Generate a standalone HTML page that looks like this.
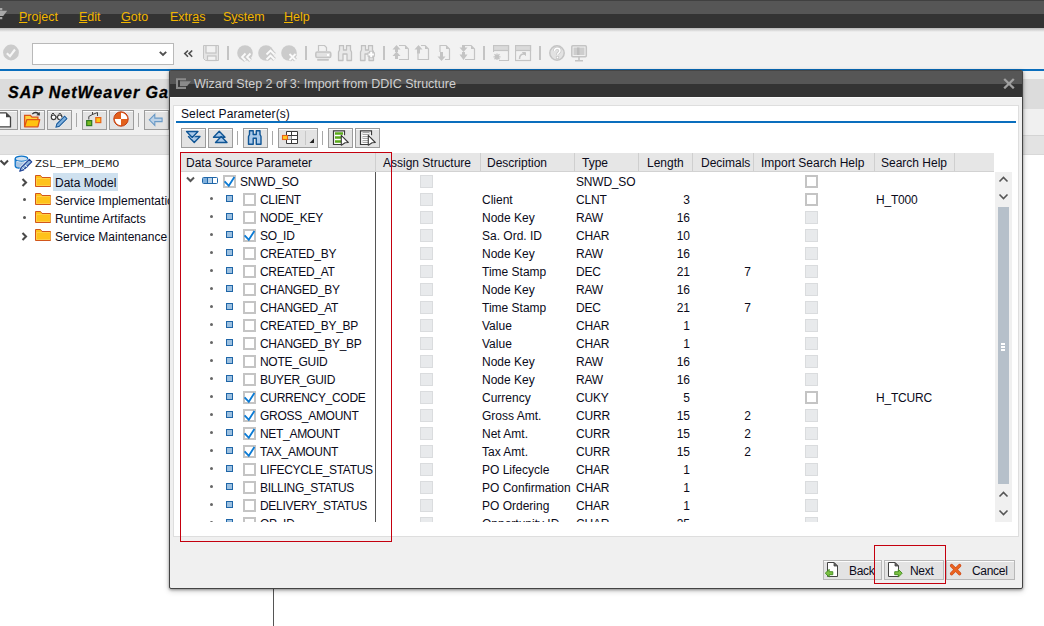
<!DOCTYPE html>
<html><head><meta charset="utf-8"><style>
*{margin:0;padding:0;box-sizing:border-box}
html,body{width:1044px;height:626px;overflow:hidden;background:#fff;font-family:"Liberation Sans",sans-serif;font-size:12px;color:#000}
.a{position:absolute}
#menubar{left:0;top:0;width:1044px;height:28px;background:linear-gradient(#404040 0,#404040 1px,#565656 1px,#565656 14px,#333 14px,#333 28px)}
.m{position:absolute;top:9px;color:#f2b600;font-size:12.5px;line-height:16px;white-space:nowrap}
.m u{text-decoration:underline;text-underline-offset:1px;text-decoration-thickness:1px}
#tbbg{left:0;top:28px;width:1044px;height:127px;background:#f2f2f2}
#shadow1{left:0;top:28px;width:1044px;height:4px;background:linear-gradient(#b8b8b8,#f2f2f2)}
#blue{left:0;top:69px;width:1044px;height:2px;background:#0a6ebd}
#titleband{left:0;top:79px;width:1044px;height:30px;background:#dcdcdc}
#apptb{left:0;top:109px;width:1044px;height:26px;background:#f0f0f0}
#grayband{left:0;top:135px;width:1044px;height:20px;background:#e3e3e3;border-top:1px solid #d4d4d4;border-bottom:1px solid #d8d8d8}
.sep{position:absolute;width:2px;background:#c4c4c4}
.btn{position:absolute;height:20px;border:1px solid #9c9c9c;background:#e3e3e3;box-shadow:inset 0 1px 0 #fcfcfc}
.tr{position:absolute;left:0;height:18px;line-height:18px;white-space:nowrap}
</style></head><body>
<div id="menubar" class="a">
<svg class="a" style="left:0;top:7px" width="8" height="14"><path d="M0 1h2.3v2.2H0zM0 3.8h7.2L3.2 9H0zM0 10h2.3v2.2H0z" fill="#a8a8a8"/></svg>
<div class="m" style="left:19px"><u>P</u>roject</div>
<div class="m" style="left:79px"><u>E</u>dit</div>
<div class="m" style="left:121px"><u>G</u>oto</div>
<div class="m" style="left:170px">Extr<u>a</u>s</div>
<div class="m" style="left:223px">S<u>y</u>stem</div>
<div class="m" style="left:284px"><u>H</u>elp</div>
</div>
<div id="tbbg" class="a"></div><div id="shadow1" class="a"></div>
<div id="blue" class="a"></div><div id="titleband" class="a"></div><div id="apptb" class="a"></div><div id="grayband" class="a"></div>
<svg class="a" style="left:3px;top:44px" width="17" height="17"><circle cx="8" cy="8.5" r="7.9" fill="#cbcbcb"/><path d="M3.8 9.2l3.2 3 5-6.7" stroke="#f6f6f6" stroke-width="2.1" fill="none"/></svg>
<div class="a" style="left:32px;top:43px;width:142px;height:22px;background:#fff;border:1px solid #b9b9b9"></div>
<svg class="a" style="left:158px;top:50px" width="10" height="8"><path d="M1.8 1.8L5 5l3.2-3.2" stroke="#505050" stroke-width="1.9" fill="none"/></svg>
<svg class="a" style="left:183px;top:49px" width="11" height="10"><path d="M5 1.5L1.8 4.6 5 7.7M9.2 1.5L6 4.6l3.2 3.1" stroke="#505050" stroke-width="1.6" fill="none"/></svg>
<svg class="a" style="left:203px;top:45px" width="17" height="17"><path d="M.5 .5h15v15H2.5L.5 13.5z" fill="#e4e4e4" stroke="#c4c4c4" stroke-width="1"/><rect x="3" y=".5" width="10" height="7.5" fill="#f2f2f2" stroke="#c4c4c4" stroke-width="1.2"/><rect x="4.5" y="11" width="8.5" height="4.5" fill="#f2f2f2" stroke="#c4c4c4" stroke-width="1.2"/></svg>
<div class="sep" style="left:227px;top:46px;height:14px"></div>
<div class="sep" style="left:305px;top:46px;height:14px"></div>
<div class="sep" style="left:383px;top:46px;height:14px"></div>
<div class="sep" style="left:483px;top:46px;height:14px"></div>
<div class="sep" style="left:539px;top:46px;height:14px"></div>
<svg class="a" style="left:237px;top:45px" width="18" height="17"><circle cx="8" cy="8" r="7.8" fill="#cbcbcb"/><path d="M8.5 8.5L5 12l3.5 3.5M13.5 8.5L10 12l3.5 3.5" stroke="#cbcbcb" stroke-width="4" fill="none"/><path d="M8.5 8.5L5 12l3.5 3.5M13.5 8.5L10 12l3.5 3.5" stroke="#fafafa" stroke-width="1.8" fill="none"/></svg>
<svg class="a" style="left:258px;top:45px" width="18" height="17"><circle cx="8" cy="8" r="7.8" fill="#cbcbcb"/><path d="M8.5 9.5l4-4 4 4M8.5 14.5l4-4 4 4" stroke="#cbcbcb" stroke-width="4" fill="none"/><path d="M8.5 9.5l4-4 4 4M8.5 14.5l4-4 4 4" stroke="#fafafa" stroke-width="1.8" fill="none"/></svg>
<svg class="a" style="left:281px;top:45px" width="18" height="17"><circle cx="8" cy="8" r="7.8" fill="#cbcbcb"/><path d="M8.5 9l6 6M14.5 9l-6 6" stroke="#cbcbcb" stroke-width="4" fill="none"/><path d="M8.5 9l6 6M14.5 9l-6 6" stroke="#fafafa" stroke-width="1.8" fill="none"/></svg>
<svg class="a" style="left:315px;top:45px" width="17" height="17"><path d="M3.5 6V.5h6l2 2V6" fill="none" stroke="#c4c4c4" stroke-width="1.2"/><rect x=".8" y="7" width="15" height="5.5" rx="1.5" fill="#e2e2e2" stroke="#c4c4c4" stroke-width="1.5"/><rect x="12" y="9" width="2" height="2" fill="#fff"/><rect x="2" y="14" width="12" height="1.8" rx=".8" fill="#c4c4c4"/></svg>
<svg class="a" style="left:337px;top:45px" width="17" height="17"><path d="M1.5 15.5V7L2.5 5V.5h4V5h3V.5h4V5l1 2v8.5h-4.5V9H6v6.5z" fill="#e8e8e8" stroke="#c0c0c0" stroke-width="1.3" stroke-linejoin="round"/></svg>
<svg class="a" style="left:359px;top:45px" width="17" height="17"><path d="M1.5 15.5V7L2.5 5V.5h4V5h3V.5h4V5l1 2v8.5h-4.5V9H6v6.5z" fill="#e8e8e8" stroke="#c0c0c0" stroke-width="1.3" stroke-linejoin="round"/><path d="M12.2 5.8v7.4M8.5 9.5h7.4" stroke="#c4c4c4" stroke-width="4.4"/><path d="M12.2 6.8v5.4M9.5 9.5h5.4" stroke="#fff" stroke-width="2"/></svg>
<svg class="a" style="left:392px;top:45px" width="17" height="17"><path d="M7 .5h6l3.5 3.5v10.5H7" fill="none" stroke="#c4c4c4" stroke-width="1.2"/><path d="M13 .5l3.5 3.5h-3.5z" fill="#c4c4c4"/><path d="M4.5 0L8.5 4.5H6V7H3V4.5H.5zM4.5 6.5L8.5 11H6v3H3v-3H.5z" fill="#c4c4c4"/></svg>
<svg class="a" style="left:414px;top:45px" width="17" height="17"><path d="M7 .5h4l3.5 3.5v10.5H4V8" fill="none" stroke="#c4c4c4" stroke-width="1.2"/><path d="M11 .5l3.5 3.5H11z" fill="#c4c4c4"/><path d="M4.5 0L8.5 4.5H6V8.5H3V4.5H.5z" fill="#c4c4c4"/></svg>
<svg class="a" style="left:437px;top:45px" width="17" height="17"><path d="M3 7V.5h6l3.5 3.5v10.5H8" fill="none" stroke="#c4c4c4" stroke-width="1.2"/><path d="M9 .5l3.5 3.5H9z" fill="#c4c4c4"/><path d="M4.5 16L8.5 11.5H6V7H3v4.5H.5z" fill="#c4c4c4"/></svg>
<svg class="a" style="left:459px;top:45px" width="17" height="17"><path d="M6 .5h6l3.5 3.5v10.5H6" fill="none" stroke="#c4c4c4" stroke-width="1.2"/><path d="M12 .5l3.5 3.5h-3.5z" fill="#c4c4c4"/><path d="M3 0h3v2.5h2.5L4.5 7 .5 2.5H3zM3 7h3v2.5h2.5L4.5 15 .5 9.5H3z" fill="#c4c4c4"/></svg>
<svg class="a" style="left:493px;top:45px" width="17" height="17"><path d="M6 15.5h9.5V.5H.5V7" fill="none" stroke="#c4c4c4" stroke-width="1.2"/><rect x=".5" y=".5" width="15" height="5" fill="#dadada" stroke="#c4c4c4" stroke-width="1.2"/><path d="M4 8.5v6.5M.5 11.8h7M1.5 9.3l5 5M6.5 9.3l-5 5" stroke="#c4c4c4" stroke-width="1.3"/><circle cx="4" cy="11.8" r="2" fill="#c4c4c4"/></svg>
<svg class="a" style="left:515px;top:45px" width="17" height="17"><rect x=".5" y=".5" width="15" height="15" fill="none" stroke="#c4c4c4" stroke-width="1.2"/><rect x=".5" y=".5" width="15" height="5" fill="#dadada" stroke="#c4c4c4" stroke-width="1.2"/><path d="M4.5 14c0-3 1.5-5 4.5-5" fill="none" stroke="#c4c4c4" stroke-width="1.5"/><path d="M7.5 7.5h3v3z" fill="#c4c4c4" stroke="#c4c4c4"/></svg>
<svg class="a" style="left:549px;top:45px" width="17" height="17"><circle cx="8" cy="8" r="7.2" fill="#e2e2e2" stroke="#c4c4c4" stroke-width="1.5"/><path d="M5.5 6c0-2 1.2-2.8 2.7-2.8S11 4 11 5.8c0 1.8-2.5 2-2.5 4" fill="none" stroke="#c8c8c8" stroke-width="3"/><path d="M5.5 6c0-2 1.2-2.8 2.7-2.8S11 4 11 5.8c0 1.8-2.5 2-2.5 4" fill="none" stroke="#fff" stroke-width="1.4"/><rect x="7.3" y="11.3" width="2.4" height="2.4" fill="#fff" stroke="#c8c8c8" stroke-width=".8"/></svg>
<svg class="a" style="left:571px;top:45px" width="17" height="17"><rect x=".8" y=".8" width="14.5" height="11" rx="1" fill="#f0f0f0" stroke="#c4c4c4" stroke-width="1.5"/><rect x="2.5" y="2.5" width="11" height="7.5" fill="#cdcdcd"/><rect x="6" y="2.5" width="2.5" height="7.5" fill="#bdbdbd"/><path d="M8 12v3M4 15.8h8" stroke="#c4c4c4" stroke-width="1.6"/></svg>
<div class="a" style="left:8px;top:84px;font-size:16px;letter-spacing:1px;font-weight:bold;font-style:italic;-webkit-text-stroke:.3px #000;line-height:18px;white-space:nowrap">SAP NetWeaver Gateway Service Builder</div>
<div class="btn" style="left:-8px;top:110px;width:26px"></div>
<div class="btn" style="left:20px;top:110px;width:25px"></div>
<div class="btn" style="left:47px;top:110px;width:25px"></div>
<div class="btn" style="left:82px;top:110px;width:25px"></div>
<div class="btn" style="left:109px;top:110px;width:25px"></div>
<div class="btn" style="left:144px;top:110px;width:25px"></div>
<div class="sep" style="left:76px;top:113px;height:14px;width:1px;background:#a8a8a8"></div>
<div class="sep" style="left:138px;top:113px;height:14px;width:1px;background:#a8a8a8"></div>
<svg class="a" style="left:0;top:112px" width="16" height="16"><path d="M-2 .8h8l4.5 4.5v9.5H-2z" fill="#fff" stroke="#444" stroke-width="1.3"/><path d="M6 .8l4.5 4.5H6z" fill="#444"/></svg>
<svg class="a" style="left:20px;top:108px" width="26" height="24"><path d="M4.6 18.8V7.4h5.8l1.6 1.8h5.9v2.4" fill="#ffd23a" stroke="#de5418" stroke-width="1.3"/><path d="M4.6 18.8l2.2-7.2h12.9l-1.8 7.2z" fill="#ffc20e" stroke="#de5418" stroke-width="1.3" stroke-linejoin="round"/><path d="M12.3 6.2c1.5-1.8 4.2-2 6.3-.6" fill="none" stroke="#333" stroke-width="1.3"/><path d="M16.3 7.2l3.6.4-.2-3.6z" fill="#333"/></svg>
<svg class="a" style="left:50px;top:111px" width="20" height="18"><circle cx="3.6" cy="6.3" r="2.3" fill="#fff" stroke="#3a3a3a" stroke-width="1.1"/><circle cx="9.8" cy="6.3" r="2.3" fill="#fff" stroke="#3a3a3a" stroke-width="1.1"/><path d="M5.9 6.5q1-1 1.6 0M1.3 6.2L1.6 3.5 3 2l1.5 1.5M8.3 3.5L9.8 2l1.4 1.5.7 2.5" fill="none" stroke="#3a3a3a" stroke-width="1"/><path d="M5.8 16.3l1-3.3 7.8-7.8 2.4 2.4-7.8 7.8z" fill="#7fb0dd" stroke="#fff" stroke-width="2" stroke-linejoin="round"/><path d="M5.8 16.3l1-3.3 7.8-7.8 2.4 2.4-7.8 7.8z" fill="#7fb0dd" stroke="#1a5a9a" stroke-width="1.1" stroke-linejoin="round"/></svg>
<svg class="a" style="left:85px;top:111px" width="20" height="18"><path d="M3.8 8.5V5.5L7.5 3.5M7.5 1v3M7.5 3.5l5-2v3.5" fill="none" stroke="#444" stroke-width="1"/><rect x="1.7" y="9.6" width="5" height="5" fill="#78bb22" stroke="#2e7a1e" stroke-width="1.2"/><rect x="10.8" y="6.6" width="5" height="5" fill="#ffc61a" stroke="#e8641a" stroke-width="1.2"/></svg>
<svg class="a" style="left:112px;top:111px" width="18" height="18"><circle cx="9" cy="8" r="7.2" fill="#e2601c" stroke="#c03a10" stroke-width="1"/><path d="M9 1.8A6.2 6.2 0 0 1 15.2 8H9zM9 8v6.2A6.2 6.2 0 0 1 2.8 8z" fill="#fff"/></svg>
<svg class="a" style="left:148px;top:113px" width="18" height="16"><path d="M1.3 6.8L6.8 1.3v3.8h7.3v3.5H6.8v3.8z" fill="#bcd2e8" stroke="#6a9ac6" stroke-width="1.1"/></svg>
<svg class="a" style="left:0;top:159px" width="9" height="8"><path d="M.5 1.5l3.8 3.8L8 1.5" stroke="#454545" stroke-width="2" fill="none"/></svg>
<svg class="a" style="left:14px;top:155px" width="19" height="17"><path d="M1.2 3.8v7c0 1.5 2.8 2.6 6.3 2.6s6.3-1.1 6.3-2.6v-7" fill="#a9c5e2" stroke="#0a72c8" stroke-width="1.3"/><ellipse cx="7.5" cy="3.8" rx="6.3" ry="2.6" fill="#cfe0f0" stroke="#0a72c8" stroke-width="1.3"/><path d="M3 6.3c2.5 1.2 6.5 1.2 9 0" stroke="#d8e6f3" stroke-width="1" fill="none"/><path d="M5.8 16.2l1.3-3.6 8.2-8.2 2.4 2.4-8.2 8.2z" fill="#8fb4dc" stroke="#fff" stroke-width="2.2" stroke-linejoin="round"/><path d="M5.8 16.2l1.3-3.6 8.2-8.2 2.4 2.4-8.2 8.2z" fill="#8fb4dc" stroke="#1c3f92" stroke-width="1.2" stroke-linejoin="round"/><path d="M8.5 12.5l2.3 2.3M11 10l2.3 2.3" stroke="#fff" stroke-width=".8"/></svg>
<div class="a" style="left:35px;top:156px;font-family:'Liberation Mono',monospace;font-size:11.7px;line-height:17px;white-space:nowrap;color:#222">ZSL_EPM_DEMO</div>
<div class="a" style="left:53px;top:173px;width:65px;height:18px;background:#cfe1ef"></div>
<svg class="a" style="left:21px;top:178px" width="7" height="9"><path d="M1.5 1l3.5 3.5L1.5 8" stroke="#4a4a4a" stroke-width="2.1" fill="none"/></svg>
<svg class="a" style="left:35px;top:175px" width="16" height="12"><path d="M.5 .5h5l1.5 2h8.5v9H.5z" fill="#ffc21a" stroke="#d2561b" stroke-width="1"/><path d="M1.5 3.5h14v7h-14z" fill="none" stroke="#ffd860" stroke-width=".6"/></svg>
<div class="a" style="left:55px;top:174px;line-height:18px;white-space:nowrap;color:#0b0b1a">Data Model</div>
<div class="a" style="left:23px;top:198px;width:3px;height:3px;border-radius:2px;background:#555"></div>
<svg class="a" style="left:35px;top:193px" width="16" height="12"><path d="M.5 .5h5l1.5 2h8.5v9H.5z" fill="#ffc21a" stroke="#d2561b" stroke-width="1"/><path d="M1.5 3.5h14v7h-14z" fill="none" stroke="#ffd860" stroke-width=".6"/></svg>
<div class="a" style="left:55px;top:192px;line-height:18px;white-space:nowrap;color:#0b0b1a">Service Implementation</div>
<div class="a" style="left:23px;top:216px;width:3px;height:3px;border-radius:2px;background:#555"></div>
<svg class="a" style="left:35px;top:211px" width="16" height="12"><path d="M.5 .5h5l1.5 2h8.5v9H.5z" fill="#ffc21a" stroke="#d2561b" stroke-width="1"/><path d="M1.5 3.5h14v7h-14z" fill="none" stroke="#ffd860" stroke-width=".6"/></svg>
<div class="a" style="left:55px;top:210px;line-height:18px;white-space:nowrap;color:#0b0b1a">Runtime Artifacts</div>
<svg class="a" style="left:21px;top:232px" width="7" height="9"><path d="M1.5 1l3.5 3.5L1.5 8" stroke="#4a4a4a" stroke-width="2.1" fill="none"/></svg>
<svg class="a" style="left:35px;top:229px" width="16" height="12"><path d="M.5 .5h5l1.5 2h8.5v9H.5z" fill="#ffc21a" stroke="#d2561b" stroke-width="1"/><path d="M1.5 3.5h14v7h-14z" fill="none" stroke="#ffd860" stroke-width=".6"/></svg>
<div class="a" style="left:55px;top:228px;line-height:18px;white-space:nowrap;color:#0b0b1a">Service Maintenance</div>
<div class="a" style="left:273px;top:588px;width:1px;height:38px;background:#555"></div>
<div class="a" style="left:1023px;top:79px;width:21px;height:30px;background:#dcdcdc"></div>
<div class="a" style="left:169px;top:70px;width:854px;height:519px;background:#f0f0f0;border:1px solid #444;border-radius:2px;box-shadow:0 1px 3px rgba(0,0,0,.38),0 2px 6px rgba(0,0,0,.18)"></div>
<div class="a" style="left:170px;top:97px;width:852px;height:1px;background:#fafafa"></div>
<div class="a" style="left:170px;top:71px;width:852px;height:26px;background:linear-gradient(#565656 0,#565656 13px,#333 13px,#333 26px)"></div>
<svg class="a" style="left:176px;top:78px" width="16" height="12"><path d="M0 .3h10v2H2v6.5h8v2.2H0z" fill="#8a8a8a"/><path d="M2 2.3h2v6.5H2z" fill="#3a3a3a"/><path d="M4 3.3h11L11.2 8H4z" fill="#8a8a8a"/></svg>
<div class="a" style="left:194px;top:76px;color:#d0d0d0;font-size:12.5px;line-height:16px;white-space:nowrap">Wizard Step 2 of 3: Import from DDIC Structure</div>
<svg class="a" style="left:1003px;top:78px" width="12" height="11"><path d="M1.2 1l9.6 9.3M10.8 1l-9.6 9.3" stroke="#a0a0a0" stroke-width="2.3"/></svg>
<div class="a" style="left:173px;top:105px;width:846px;height:432px;background:#fff;border:1px solid #dedede"></div>
<div class="a" style="left:181px;top:106px;line-height:16px;white-space:nowrap;color:#0b0b1a;letter-spacing:.12px">Select Parameter(s)</div>
<div class="a" style="left:176px;top:121px;width:840px;height:2px;background:#0a6ebd"></div>
<div class="btn" style="left:181px;top:128px;width:25px"></div>
<div class="btn" style="left:208px;top:128px;width:25px"></div>
<div class="btn" style="left:243px;top:128px;width:25px"></div>
<div class="btn" style="left:278px;top:128px;width:40px"></div>
<div class="btn" style="left:328px;top:128px;width:25px"></div>
<div class="btn" style="left:355px;top:128px;width:25px"></div>
<div class="sep" style="left:237px;top:131px;height:14px;width:1px;background:#a8a8a8"></div>
<div class="sep" style="left:272px;top:131px;height:14px;width:1px;background:#a8a8a8"></div>
<div class="sep" style="left:322px;top:131px;height:14px;width:1px;background:#a8a8a8"></div>
<div class="a" style="left:305px;top:131px;width:1px;height:14px;background:#c8c8c8"></div>
<svg class="a" style="left:182px;top:128px" width="24" height="20"><path d="M6.5 8.5h11.5l-5.75 6z" fill="#a9c9e9" stroke="#0f5595" stroke-width="1.4" stroke-linejoin="round"/><path d="M4.5 3.5h11.5l-5.75 6z" fill="#a9c9e9" stroke="#fff" stroke-width="2.6" stroke-linejoin="round" stroke-opacity=".6"/><path d="M4.5 3.5h11.5l-5.75 6z" fill="#a9c9e9" stroke="#0f5595" stroke-width="1.4" stroke-linejoin="round"/></svg>
<svg class="a" style="left:209px;top:128px" width="24" height="20"><path d="M4.5 9.3h11.5l-5.75-6z" fill="#a9c9e9" stroke="#0f5595" stroke-width="1.4" stroke-linejoin="round"/><path d="M6.5 14.5h11.5l-5.75-6z" fill="#a9c9e9" stroke="#0f5595" stroke-width="1.4" stroke-linejoin="round"/></svg>
<svg class="a" style="left:247px;top:130px" width="16" height="16"><path d="M1.5 14.3V6.5L2.5 4.5V.8h3.7v3.7h3.1V.8H13v3.7l1 2v7.8H9.3V8.2H6.2v6.1z" fill="#a9c9e9" stroke="#0f5595" stroke-width="1.4" stroke-linejoin="round"/></svg>
<svg class="a" style="left:281px;top:130px" width="18" height="15"><rect x="5.5" y="1.5" width="11" height="12" fill="#fff"/><path d="M5.5 1.5h11M5.5 5.5h11M5.5 9.5h11M5.5 13.5h11M5.5 1.5v12M10.5 1.5v12M16.5 1.5v12" stroke="#3a3a3a" stroke-width="1" fill="none"/><rect x="6" y="6" width="4.5" height="3.5" fill="#d8d8d8"/><rect x="1.5" y="5.5" width="5" height="4" fill="#ffcc22" stroke="#e8621a" stroke-width="1.1"/></svg>
<svg class="a" style="left:309px;top:138px" width="6" height="6"><path d="M5 .5V5H.5z" fill="#222"/></svg>
<svg class="a" style="left:332px;top:130px" width="18" height="16"><path d="M9 14.5H1.5V.8h11v4.5" fill="#fff" stroke="#3a3a3a" stroke-width="1.2"/><path d="M3 3.5h8M3 7.5h6.5M3 11.5h6.5" stroke="#5aaa1a" stroke-width="2.5"/><path d="M9.3 5.3l7 7.2-3.2.3-3.8 2.4z" fill="#fff" stroke="#3a3a3a" stroke-width="1.1" stroke-linejoin="round"/></svg>
<svg class="a" style="left:359px;top:130px" width="18" height="16"><path d="M9 14.5H1.5V.8h11v4.5" fill="#fff" stroke="#3a3a3a" stroke-width="1.2"/><path d="M3.5 3.5h7M3.5 7.5h5.5M3.5 11.5h5.5" stroke="#8a8a8a" stroke-width="2.4"/><path d="M3.5 3.5h7M3.5 7.5h5.5M3.5 11.5h5.5" stroke="#fff" stroke-width=".9"/><path d="M9.3 5.3l7 7.2-3.2.3-3.8 2.4z" fill="#fff" stroke="#3a3a3a" stroke-width="1.1" stroke-linejoin="round"/></svg>
<div class="a" style="left:181px;top:153px;width:813px;height:19px;background:#e6e6e6;border-bottom:1px solid #d2d2d2"></div>
<div class="a" style="left:375px;top:153px;width:1px;height:18px;background:#cfcfcf"></div>
<div class="a" style="left:480px;top:153px;width:1px;height:18px;background:#cfcfcf"></div>
<div class="a" style="left:574px;top:153px;width:1px;height:18px;background:#cfcfcf"></div>
<div class="a" style="left:638px;top:153px;width:1px;height:18px;background:#cfcfcf"></div>
<div class="a" style="left:692px;top:153px;width:1px;height:18px;background:#cfcfcf"></div>
<div class="a" style="left:753px;top:153px;width:1px;height:18px;background:#cfcfcf"></div>
<div class="a" style="left:874px;top:153px;width:1px;height:18px;background:#cfcfcf"></div>
<div class="a" style="left:954px;top:153px;width:1px;height:18px;background:#cfcfcf"></div>
<div class="a" style="left:186px;top:154px;line-height:18px;white-space:nowrap;color:#0b0b1a">Data Source Parameter</div>
<div class="a" style="left:383px;top:154px;line-height:18px;white-space:nowrap;color:#0b0b1a">Assign Structure</div>
<div class="a" style="left:487px;top:154px;line-height:18px;white-space:nowrap;color:#0b0b1a">Description</div>
<div class="a" style="left:582px;top:154px;line-height:18px;white-space:nowrap;color:#0b0b1a">Type</div>
<div class="a" style="left:647px;top:154px;line-height:18px;white-space:nowrap;color:#0b0b1a">Length</div>
<div class="a" style="left:701px;top:154px;line-height:18px;white-space:nowrap;color:#0b0b1a">Decimals</div>
<div class="a" style="left:761px;top:154px;line-height:18px;white-space:nowrap;color:#0b0b1a">Import Search Help</div>
<div class="a" style="left:881px;top:154px;line-height:18px;white-space:nowrap;color:#0b0b1a">Search Help</div>
<div class="a" style="left:181px;top:172px;width:814px;height:350px;overflow:hidden">
<svg class="a" style="left:5px;top:4px" width="9" height="7"><path d="M1 1.5l3.5 3.5L8 1.5" stroke="#555" stroke-width="2" fill="none"/></svg>
<svg class="a" style="left:21px;top:5px" width="17" height="7"><rect x=".5" y=".5" width="15" height="6" rx="1" fill="#fff" stroke="#1f66a8"/><rect x="1" y="1" width="4.5" height="5" fill="#7fb0dd"/><rect x="6" y="1" width="4.5" height="5" fill="#b8d3ec"/><path d="M5.5 1v5M10.5 1v5" stroke="#1f66a8" stroke-width="1"/></svg>
<svg class="a" style="left:42px;top:3px" width="13" height="13"><rect x="1" y="1" width="11" height="11" fill="#fff" stroke="#c4c4c4" stroke-width="2"/><path d="M1.6 6.3l4.2 4.5 5.6-8.8" stroke="#0a7ad4" stroke-width="1.8" fill="none"/></svg>
<div class="a" style="left:59px;top:1px;line-height:18px;white-space:nowrap;color:#0b0b1a;letter-spacing:-.3px">SNWD_SO</div>
<div class="a" style="left:239px;top:3px;width:13px;height:13px;background:#e8eaec;border:1px solid #dadcde"></div>
<div class="a" style="left:301px;top:1px;line-height:18px;white-space:nowrap;color:#0b0b1a"></div>
<div class="a" style="left:395px;top:1px;line-height:18px;white-space:nowrap;color:#0b0b1a;letter-spacing:-.2px">SNWD_SO</div>
<svg class="a" style="left:624px;top:3px" width="13" height="13"><rect x="1" y="1" width="11" height="11" fill="#fff" stroke="#c4c4c4" stroke-width="2"/></svg>
<div class="a" style="left:29px;top:25px;width:3px;height:3px;border-radius:2px;background:#666"></div>
<div class="a" style="left:45px;top:23px;width:7px;height:7px;background:#9cc0e0;border:1px solid #1f66a8"></div>
<svg class="a" style="left:62px;top:21px" width="13" height="13"><rect x="1" y="1" width="11" height="11" fill="#fff" stroke="#c4c4c4" stroke-width="2"/></svg>
<div class="a" style="left:79px;top:19px;line-height:18px;white-space:nowrap;color:#0b0b1a;letter-spacing:-.3px">CLIENT</div>
<div class="a" style="left:239px;top:21px;width:13px;height:13px;background:#e8eaec;border:1px solid #dadcde"></div>
<div class="a" style="left:301px;top:19px;line-height:18px;white-space:nowrap;color:#0b0b1a">Client</div>
<div class="a" style="left:395px;top:19px;line-height:18px;white-space:nowrap;color:#0b0b1a;letter-spacing:-.2px">CLNT</div>
<div class="a" style="left:450px;width:59px;text-align:right;top:19px;line-height:18px;white-space:nowrap;color:#0b0b1a">3</div>
<svg class="a" style="left:624px;top:21px" width="13" height="13"><rect x="1" y="1" width="11" height="11" fill="#fff" stroke="#c4c4c4" stroke-width="2"/></svg>
<div class="a" style="left:695px;top:19px;line-height:18px;white-space:nowrap;color:#0b0b1a;letter-spacing:-.2px">H_T000</div>
<div class="a" style="left:29px;top:43px;width:3px;height:3px;border-radius:2px;background:#666"></div>
<div class="a" style="left:45px;top:41px;width:7px;height:7px;background:#9cc0e0;border:1px solid #1f66a8"></div>
<svg class="a" style="left:62px;top:39px" width="13" height="13"><rect x="1" y="1" width="11" height="11" fill="#fff" stroke="#c4c4c4" stroke-width="2"/></svg>
<div class="a" style="left:79px;top:37px;line-height:18px;white-space:nowrap;color:#0b0b1a;letter-spacing:-.3px">NODE_KEY</div>
<div class="a" style="left:239px;top:39px;width:13px;height:13px;background:#e8eaec;border:1px solid #dadcde"></div>
<div class="a" style="left:301px;top:37px;line-height:18px;white-space:nowrap;color:#0b0b1a">Node Key</div>
<div class="a" style="left:395px;top:37px;line-height:18px;white-space:nowrap;color:#0b0b1a;letter-spacing:-.2px">RAW</div>
<div class="a" style="left:450px;width:59px;text-align:right;top:37px;line-height:18px;white-space:nowrap;color:#0b0b1a">16</div>
<div class="a" style="left:624px;top:39px;width:13px;height:13px;background:#e8eaec;border:1px solid #dadcde"></div>
<div class="a" style="left:29px;top:61px;width:3px;height:3px;border-radius:2px;background:#666"></div>
<div class="a" style="left:45px;top:59px;width:7px;height:7px;background:#9cc0e0;border:1px solid #1f66a8"></div>
<svg class="a" style="left:62px;top:57px" width="13" height="13"><rect x="1" y="1" width="11" height="11" fill="#fff" stroke="#c4c4c4" stroke-width="2"/><path d="M1.6 6.3l4.2 4.5 5.6-8.8" stroke="#0a7ad4" stroke-width="1.8" fill="none"/></svg>
<div class="a" style="left:79px;top:55px;line-height:18px;white-space:nowrap;color:#0b0b1a;letter-spacing:-.3px">SO_ID</div>
<div class="a" style="left:239px;top:57px;width:13px;height:13px;background:#e8eaec;border:1px solid #dadcde"></div>
<div class="a" style="left:301px;top:55px;line-height:18px;white-space:nowrap;color:#0b0b1a">Sa. Ord. ID</div>
<div class="a" style="left:395px;top:55px;line-height:18px;white-space:nowrap;color:#0b0b1a;letter-spacing:-.2px">CHAR</div>
<div class="a" style="left:450px;width:59px;text-align:right;top:55px;line-height:18px;white-space:nowrap;color:#0b0b1a">10</div>
<div class="a" style="left:624px;top:57px;width:13px;height:13px;background:#e8eaec;border:1px solid #dadcde"></div>
<div class="a" style="left:29px;top:79px;width:3px;height:3px;border-radius:2px;background:#666"></div>
<div class="a" style="left:45px;top:77px;width:7px;height:7px;background:#9cc0e0;border:1px solid #1f66a8"></div>
<svg class="a" style="left:62px;top:75px" width="13" height="13"><rect x="1" y="1" width="11" height="11" fill="#fff" stroke="#c4c4c4" stroke-width="2"/></svg>
<div class="a" style="left:79px;top:73px;line-height:18px;white-space:nowrap;color:#0b0b1a;letter-spacing:-.3px">CREATED_BY</div>
<div class="a" style="left:239px;top:75px;width:13px;height:13px;background:#e8eaec;border:1px solid #dadcde"></div>
<div class="a" style="left:301px;top:73px;line-height:18px;white-space:nowrap;color:#0b0b1a">Node Key</div>
<div class="a" style="left:395px;top:73px;line-height:18px;white-space:nowrap;color:#0b0b1a;letter-spacing:-.2px">RAW</div>
<div class="a" style="left:450px;width:59px;text-align:right;top:73px;line-height:18px;white-space:nowrap;color:#0b0b1a">16</div>
<div class="a" style="left:624px;top:75px;width:13px;height:13px;background:#e8eaec;border:1px solid #dadcde"></div>
<div class="a" style="left:29px;top:97px;width:3px;height:3px;border-radius:2px;background:#666"></div>
<div class="a" style="left:45px;top:95px;width:7px;height:7px;background:#9cc0e0;border:1px solid #1f66a8"></div>
<svg class="a" style="left:62px;top:93px" width="13" height="13"><rect x="1" y="1" width="11" height="11" fill="#fff" stroke="#c4c4c4" stroke-width="2"/></svg>
<div class="a" style="left:79px;top:91px;line-height:18px;white-space:nowrap;color:#0b0b1a;letter-spacing:-.3px">CREATED_AT</div>
<div class="a" style="left:239px;top:93px;width:13px;height:13px;background:#e8eaec;border:1px solid #dadcde"></div>
<div class="a" style="left:301px;top:91px;line-height:18px;white-space:nowrap;color:#0b0b1a">Time Stamp</div>
<div class="a" style="left:395px;top:91px;line-height:18px;white-space:nowrap;color:#0b0b1a;letter-spacing:-.2px">DEC</div>
<div class="a" style="left:450px;width:59px;text-align:right;top:91px;line-height:18px;white-space:nowrap;color:#0b0b1a">21</div>
<div class="a" style="left:510px;width:60px;text-align:right;top:91px;line-height:18px;white-space:nowrap;color:#0b0b1a">7</div>
<div class="a" style="left:624px;top:93px;width:13px;height:13px;background:#e8eaec;border:1px solid #dadcde"></div>
<div class="a" style="left:29px;top:115px;width:3px;height:3px;border-radius:2px;background:#666"></div>
<div class="a" style="left:45px;top:113px;width:7px;height:7px;background:#9cc0e0;border:1px solid #1f66a8"></div>
<svg class="a" style="left:62px;top:111px" width="13" height="13"><rect x="1" y="1" width="11" height="11" fill="#fff" stroke="#c4c4c4" stroke-width="2"/></svg>
<div class="a" style="left:79px;top:109px;line-height:18px;white-space:nowrap;color:#0b0b1a;letter-spacing:-.3px">CHANGED_BY</div>
<div class="a" style="left:239px;top:111px;width:13px;height:13px;background:#e8eaec;border:1px solid #dadcde"></div>
<div class="a" style="left:301px;top:109px;line-height:18px;white-space:nowrap;color:#0b0b1a">Node Key</div>
<div class="a" style="left:395px;top:109px;line-height:18px;white-space:nowrap;color:#0b0b1a;letter-spacing:-.2px">RAW</div>
<div class="a" style="left:450px;width:59px;text-align:right;top:109px;line-height:18px;white-space:nowrap;color:#0b0b1a">16</div>
<div class="a" style="left:624px;top:111px;width:13px;height:13px;background:#e8eaec;border:1px solid #dadcde"></div>
<div class="a" style="left:29px;top:133px;width:3px;height:3px;border-radius:2px;background:#666"></div>
<div class="a" style="left:45px;top:131px;width:7px;height:7px;background:#9cc0e0;border:1px solid #1f66a8"></div>
<svg class="a" style="left:62px;top:129px" width="13" height="13"><rect x="1" y="1" width="11" height="11" fill="#fff" stroke="#c4c4c4" stroke-width="2"/></svg>
<div class="a" style="left:79px;top:127px;line-height:18px;white-space:nowrap;color:#0b0b1a;letter-spacing:-.3px">CHANGED_AT</div>
<div class="a" style="left:239px;top:129px;width:13px;height:13px;background:#e8eaec;border:1px solid #dadcde"></div>
<div class="a" style="left:301px;top:127px;line-height:18px;white-space:nowrap;color:#0b0b1a">Time Stamp</div>
<div class="a" style="left:395px;top:127px;line-height:18px;white-space:nowrap;color:#0b0b1a;letter-spacing:-.2px">DEC</div>
<div class="a" style="left:450px;width:59px;text-align:right;top:127px;line-height:18px;white-space:nowrap;color:#0b0b1a">21</div>
<div class="a" style="left:510px;width:60px;text-align:right;top:127px;line-height:18px;white-space:nowrap;color:#0b0b1a">7</div>
<div class="a" style="left:624px;top:129px;width:13px;height:13px;background:#e8eaec;border:1px solid #dadcde"></div>
<div class="a" style="left:29px;top:151px;width:3px;height:3px;border-radius:2px;background:#666"></div>
<div class="a" style="left:45px;top:149px;width:7px;height:7px;background:#9cc0e0;border:1px solid #1f66a8"></div>
<svg class="a" style="left:62px;top:147px" width="13" height="13"><rect x="1" y="1" width="11" height="11" fill="#fff" stroke="#c4c4c4" stroke-width="2"/></svg>
<div class="a" style="left:79px;top:145px;line-height:18px;white-space:nowrap;color:#0b0b1a;letter-spacing:-.3px">CREATED_BY_BP</div>
<div class="a" style="left:239px;top:147px;width:13px;height:13px;background:#e8eaec;border:1px solid #dadcde"></div>
<div class="a" style="left:301px;top:145px;line-height:18px;white-space:nowrap;color:#0b0b1a">Value</div>
<div class="a" style="left:395px;top:145px;line-height:18px;white-space:nowrap;color:#0b0b1a;letter-spacing:-.2px">CHAR</div>
<div class="a" style="left:450px;width:59px;text-align:right;top:145px;line-height:18px;white-space:nowrap;color:#0b0b1a">1</div>
<div class="a" style="left:624px;top:147px;width:13px;height:13px;background:#e8eaec;border:1px solid #dadcde"></div>
<div class="a" style="left:29px;top:169px;width:3px;height:3px;border-radius:2px;background:#666"></div>
<div class="a" style="left:45px;top:167px;width:7px;height:7px;background:#9cc0e0;border:1px solid #1f66a8"></div>
<svg class="a" style="left:62px;top:165px" width="13" height="13"><rect x="1" y="1" width="11" height="11" fill="#fff" stroke="#c4c4c4" stroke-width="2"/></svg>
<div class="a" style="left:79px;top:163px;line-height:18px;white-space:nowrap;color:#0b0b1a;letter-spacing:-.3px">CHANGED_BY_BP</div>
<div class="a" style="left:239px;top:165px;width:13px;height:13px;background:#e8eaec;border:1px solid #dadcde"></div>
<div class="a" style="left:301px;top:163px;line-height:18px;white-space:nowrap;color:#0b0b1a">Value</div>
<div class="a" style="left:395px;top:163px;line-height:18px;white-space:nowrap;color:#0b0b1a;letter-spacing:-.2px">CHAR</div>
<div class="a" style="left:450px;width:59px;text-align:right;top:163px;line-height:18px;white-space:nowrap;color:#0b0b1a">1</div>
<div class="a" style="left:624px;top:165px;width:13px;height:13px;background:#e8eaec;border:1px solid #dadcde"></div>
<div class="a" style="left:29px;top:187px;width:3px;height:3px;border-radius:2px;background:#666"></div>
<div class="a" style="left:45px;top:185px;width:7px;height:7px;background:#9cc0e0;border:1px solid #1f66a8"></div>
<svg class="a" style="left:62px;top:183px" width="13" height="13"><rect x="1" y="1" width="11" height="11" fill="#fff" stroke="#c4c4c4" stroke-width="2"/></svg>
<div class="a" style="left:79px;top:181px;line-height:18px;white-space:nowrap;color:#0b0b1a;letter-spacing:-.3px">NOTE_GUID</div>
<div class="a" style="left:239px;top:183px;width:13px;height:13px;background:#e8eaec;border:1px solid #dadcde"></div>
<div class="a" style="left:301px;top:181px;line-height:18px;white-space:nowrap;color:#0b0b1a">Node Key</div>
<div class="a" style="left:395px;top:181px;line-height:18px;white-space:nowrap;color:#0b0b1a;letter-spacing:-.2px">RAW</div>
<div class="a" style="left:450px;width:59px;text-align:right;top:181px;line-height:18px;white-space:nowrap;color:#0b0b1a">16</div>
<div class="a" style="left:624px;top:183px;width:13px;height:13px;background:#e8eaec;border:1px solid #dadcde"></div>
<div class="a" style="left:29px;top:205px;width:3px;height:3px;border-radius:2px;background:#666"></div>
<div class="a" style="left:45px;top:203px;width:7px;height:7px;background:#9cc0e0;border:1px solid #1f66a8"></div>
<svg class="a" style="left:62px;top:201px" width="13" height="13"><rect x="1" y="1" width="11" height="11" fill="#fff" stroke="#c4c4c4" stroke-width="2"/></svg>
<div class="a" style="left:79px;top:199px;line-height:18px;white-space:nowrap;color:#0b0b1a;letter-spacing:-.3px">BUYER_GUID</div>
<div class="a" style="left:239px;top:201px;width:13px;height:13px;background:#e8eaec;border:1px solid #dadcde"></div>
<div class="a" style="left:301px;top:199px;line-height:18px;white-space:nowrap;color:#0b0b1a">Node Key</div>
<div class="a" style="left:395px;top:199px;line-height:18px;white-space:nowrap;color:#0b0b1a;letter-spacing:-.2px">RAW</div>
<div class="a" style="left:450px;width:59px;text-align:right;top:199px;line-height:18px;white-space:nowrap;color:#0b0b1a">16</div>
<div class="a" style="left:624px;top:201px;width:13px;height:13px;background:#e8eaec;border:1px solid #dadcde"></div>
<div class="a" style="left:29px;top:223px;width:3px;height:3px;border-radius:2px;background:#666"></div>
<div class="a" style="left:45px;top:221px;width:7px;height:7px;background:#9cc0e0;border:1px solid #1f66a8"></div>
<svg class="a" style="left:62px;top:219px" width="13" height="13"><rect x="1" y="1" width="11" height="11" fill="#fff" stroke="#c4c4c4" stroke-width="2"/><path d="M1.6 6.3l4.2 4.5 5.6-8.8" stroke="#0a7ad4" stroke-width="1.8" fill="none"/></svg>
<div class="a" style="left:79px;top:217px;line-height:18px;white-space:nowrap;color:#0b0b1a;letter-spacing:-.3px">CURRENCY_CODE</div>
<div class="a" style="left:239px;top:219px;width:13px;height:13px;background:#e8eaec;border:1px solid #dadcde"></div>
<div class="a" style="left:301px;top:217px;line-height:18px;white-space:nowrap;color:#0b0b1a">Currency</div>
<div class="a" style="left:395px;top:217px;line-height:18px;white-space:nowrap;color:#0b0b1a;letter-spacing:-.2px">CUKY</div>
<div class="a" style="left:450px;width:59px;text-align:right;top:217px;line-height:18px;white-space:nowrap;color:#0b0b1a">5</div>
<svg class="a" style="left:624px;top:219px" width="13" height="13"><rect x="1" y="1" width="11" height="11" fill="#fff" stroke="#c4c4c4" stroke-width="2"/></svg>
<div class="a" style="left:695px;top:217px;line-height:18px;white-space:nowrap;color:#0b0b1a;letter-spacing:-.2px">H_TCURC</div>
<div class="a" style="left:29px;top:241px;width:3px;height:3px;border-radius:2px;background:#666"></div>
<div class="a" style="left:45px;top:239px;width:7px;height:7px;background:#9cc0e0;border:1px solid #1f66a8"></div>
<svg class="a" style="left:62px;top:237px" width="13" height="13"><rect x="1" y="1" width="11" height="11" fill="#fff" stroke="#c4c4c4" stroke-width="2"/><path d="M1.6 6.3l4.2 4.5 5.6-8.8" stroke="#0a7ad4" stroke-width="1.8" fill="none"/></svg>
<div class="a" style="left:79px;top:235px;line-height:18px;white-space:nowrap;color:#0b0b1a;letter-spacing:-.3px">GROSS_AMOUNT</div>
<div class="a" style="left:239px;top:237px;width:13px;height:13px;background:#e8eaec;border:1px solid #dadcde"></div>
<div class="a" style="left:301px;top:235px;line-height:18px;white-space:nowrap;color:#0b0b1a">Gross Amt.</div>
<div class="a" style="left:395px;top:235px;line-height:18px;white-space:nowrap;color:#0b0b1a;letter-spacing:-.2px">CURR</div>
<div class="a" style="left:450px;width:59px;text-align:right;top:235px;line-height:18px;white-space:nowrap;color:#0b0b1a">15</div>
<div class="a" style="left:510px;width:60px;text-align:right;top:235px;line-height:18px;white-space:nowrap;color:#0b0b1a">2</div>
<div class="a" style="left:624px;top:237px;width:13px;height:13px;background:#e8eaec;border:1px solid #dadcde"></div>
<div class="a" style="left:29px;top:259px;width:3px;height:3px;border-radius:2px;background:#666"></div>
<div class="a" style="left:45px;top:257px;width:7px;height:7px;background:#9cc0e0;border:1px solid #1f66a8"></div>
<svg class="a" style="left:62px;top:255px" width="13" height="13"><rect x="1" y="1" width="11" height="11" fill="#fff" stroke="#c4c4c4" stroke-width="2"/><path d="M1.6 6.3l4.2 4.5 5.6-8.8" stroke="#0a7ad4" stroke-width="1.8" fill="none"/></svg>
<div class="a" style="left:79px;top:253px;line-height:18px;white-space:nowrap;color:#0b0b1a;letter-spacing:-.3px">NET_AMOUNT</div>
<div class="a" style="left:239px;top:255px;width:13px;height:13px;background:#e8eaec;border:1px solid #dadcde"></div>
<div class="a" style="left:301px;top:253px;line-height:18px;white-space:nowrap;color:#0b0b1a">Net Amt.</div>
<div class="a" style="left:395px;top:253px;line-height:18px;white-space:nowrap;color:#0b0b1a;letter-spacing:-.2px">CURR</div>
<div class="a" style="left:450px;width:59px;text-align:right;top:253px;line-height:18px;white-space:nowrap;color:#0b0b1a">15</div>
<div class="a" style="left:510px;width:60px;text-align:right;top:253px;line-height:18px;white-space:nowrap;color:#0b0b1a">2</div>
<div class="a" style="left:624px;top:255px;width:13px;height:13px;background:#e8eaec;border:1px solid #dadcde"></div>
<div class="a" style="left:29px;top:277px;width:3px;height:3px;border-radius:2px;background:#666"></div>
<div class="a" style="left:45px;top:275px;width:7px;height:7px;background:#9cc0e0;border:1px solid #1f66a8"></div>
<svg class="a" style="left:62px;top:273px" width="13" height="13"><rect x="1" y="1" width="11" height="11" fill="#fff" stroke="#c4c4c4" stroke-width="2"/><path d="M1.6 6.3l4.2 4.5 5.6-8.8" stroke="#0a7ad4" stroke-width="1.8" fill="none"/></svg>
<div class="a" style="left:79px;top:271px;line-height:18px;white-space:nowrap;color:#0b0b1a;letter-spacing:-.3px">TAX_AMOUNT</div>
<div class="a" style="left:239px;top:273px;width:13px;height:13px;background:#e8eaec;border:1px solid #dadcde"></div>
<div class="a" style="left:301px;top:271px;line-height:18px;white-space:nowrap;color:#0b0b1a">Tax Amt.</div>
<div class="a" style="left:395px;top:271px;line-height:18px;white-space:nowrap;color:#0b0b1a;letter-spacing:-.2px">CURR</div>
<div class="a" style="left:450px;width:59px;text-align:right;top:271px;line-height:18px;white-space:nowrap;color:#0b0b1a">15</div>
<div class="a" style="left:510px;width:60px;text-align:right;top:271px;line-height:18px;white-space:nowrap;color:#0b0b1a">2</div>
<div class="a" style="left:624px;top:273px;width:13px;height:13px;background:#e8eaec;border:1px solid #dadcde"></div>
<div class="a" style="left:29px;top:295px;width:3px;height:3px;border-radius:2px;background:#666"></div>
<div class="a" style="left:45px;top:293px;width:7px;height:7px;background:#9cc0e0;border:1px solid #1f66a8"></div>
<svg class="a" style="left:62px;top:291px" width="13" height="13"><rect x="1" y="1" width="11" height="11" fill="#fff" stroke="#c4c4c4" stroke-width="2"/></svg>
<div class="a" style="left:79px;top:289px;line-height:18px;white-space:nowrap;color:#0b0b1a;letter-spacing:-.3px">LIFECYCLE_STATUS</div>
<div class="a" style="left:239px;top:291px;width:13px;height:13px;background:#e8eaec;border:1px solid #dadcde"></div>
<div class="a" style="left:301px;top:289px;line-height:18px;white-space:nowrap;color:#0b0b1a">PO Lifecycle</div>
<div class="a" style="left:395px;top:289px;line-height:18px;white-space:nowrap;color:#0b0b1a;letter-spacing:-.2px">CHAR</div>
<div class="a" style="left:450px;width:59px;text-align:right;top:289px;line-height:18px;white-space:nowrap;color:#0b0b1a">1</div>
<div class="a" style="left:624px;top:291px;width:13px;height:13px;background:#e8eaec;border:1px solid #dadcde"></div>
<div class="a" style="left:29px;top:313px;width:3px;height:3px;border-radius:2px;background:#666"></div>
<div class="a" style="left:45px;top:311px;width:7px;height:7px;background:#9cc0e0;border:1px solid #1f66a8"></div>
<svg class="a" style="left:62px;top:309px" width="13" height="13"><rect x="1" y="1" width="11" height="11" fill="#fff" stroke="#c4c4c4" stroke-width="2"/></svg>
<div class="a" style="left:79px;top:307px;line-height:18px;white-space:nowrap;color:#0b0b1a;letter-spacing:-.3px">BILLING_STATUS</div>
<div class="a" style="left:239px;top:309px;width:13px;height:13px;background:#e8eaec;border:1px solid #dadcde"></div>
<div class="a" style="left:301px;top:307px;line-height:18px;white-space:nowrap;color:#0b0b1a">PO Confirmation</div>
<div class="a" style="left:395px;top:307px;line-height:18px;white-space:nowrap;color:#0b0b1a;letter-spacing:-.2px">CHAR</div>
<div class="a" style="left:450px;width:59px;text-align:right;top:307px;line-height:18px;white-space:nowrap;color:#0b0b1a">1</div>
<div class="a" style="left:624px;top:309px;width:13px;height:13px;background:#e8eaec;border:1px solid #dadcde"></div>
<div class="a" style="left:29px;top:331px;width:3px;height:3px;border-radius:2px;background:#666"></div>
<div class="a" style="left:45px;top:329px;width:7px;height:7px;background:#9cc0e0;border:1px solid #1f66a8"></div>
<svg class="a" style="left:62px;top:327px" width="13" height="13"><rect x="1" y="1" width="11" height="11" fill="#fff" stroke="#c4c4c4" stroke-width="2"/></svg>
<div class="a" style="left:79px;top:325px;line-height:18px;white-space:nowrap;color:#0b0b1a;letter-spacing:-.3px">DELIVERY_STATUS</div>
<div class="a" style="left:239px;top:327px;width:13px;height:13px;background:#e8eaec;border:1px solid #dadcde"></div>
<div class="a" style="left:301px;top:325px;line-height:18px;white-space:nowrap;color:#0b0b1a">PO Ordering</div>
<div class="a" style="left:395px;top:325px;line-height:18px;white-space:nowrap;color:#0b0b1a;letter-spacing:-.2px">CHAR</div>
<div class="a" style="left:450px;width:59px;text-align:right;top:325px;line-height:18px;white-space:nowrap;color:#0b0b1a">1</div>
<div class="a" style="left:624px;top:327px;width:13px;height:13px;background:#e8eaec;border:1px solid #dadcde"></div>
<div class="a" style="left:29px;top:349px;width:3px;height:3px;border-radius:2px;background:#666"></div>
<div class="a" style="left:45px;top:347px;width:7px;height:7px;background:#9cc0e0;border:1px solid #1f66a8"></div>
<svg class="a" style="left:62px;top:345px" width="13" height="13"><rect x="1" y="1" width="11" height="11" fill="#fff" stroke="#c4c4c4" stroke-width="2"/></svg>
<div class="a" style="left:79px;top:343px;line-height:18px;white-space:nowrap;color:#0b0b1a;letter-spacing:-.3px">OP_ID</div>
<div class="a" style="left:239px;top:345px;width:13px;height:13px;background:#e8eaec;border:1px solid #dadcde"></div>
<div class="a" style="left:301px;top:343px;line-height:18px;white-space:nowrap;color:#0b0b1a">Opportunity ID</div>
<div class="a" style="left:395px;top:343px;line-height:18px;white-space:nowrap;color:#0b0b1a;letter-spacing:-.2px">CHAR</div>
<div class="a" style="left:450px;width:59px;text-align:right;top:343px;line-height:18px;white-space:nowrap;color:#0b0b1a">35</div>
<div class="a" style="left:624px;top:345px;width:13px;height:13px;background:#e8eaec;border:1px solid #dadcde"></div>
<div class="a" style="left:194px;top:0;width:1px;height:350px;background:#555"></div>
</div>
<div class="a" style="left:995px;top:172px;width:17px;height:350px;background:#f0f0f0"></div>
<svg class="a" style="left:998px;top:176px" width="11" height="7"><path d="M1.5 5.5L5.5 1.5l4 4" stroke="#555" stroke-width="1.6" fill="none"/></svg>
<svg class="a" style="left:998px;top:193px" width="11" height="7"><path d="M1.5 1.5L5.5 5.5l4-4" stroke="#555" stroke-width="1.6" fill="none"/></svg>
<div class="a" style="left:998px;top:207px;width:11px;height:277px;background:#b6c0ca"></div>
<div class="a" style="left:1001px;top:343px;width:4px;height:8px;background:repeating-linear-gradient(#fff 0,#fff 2px,transparent 2px,transparent 3px)"></div>
<svg class="a" style="left:998px;top:491px" width="11" height="7"><path d="M1.5 5.5L5.5 1.5l4 4" stroke="#555" stroke-width="1.6" fill="none"/></svg>
<svg class="a" style="left:998px;top:509px" width="11" height="7"><path d="M1.5 1.5L5.5 5.5l4-4" stroke="#555" stroke-width="1.6" fill="none"/></svg>
<div class="a" style="left:180px;top:152px;width:212px;height:390px;border:1.5px solid #c4000e"></div>
<div class="btn" style="left:823px;top:560px;width:59px;background:#e3e3e3;border-color:#b8b8b8"></div>
<div class="btn" style="left:884px;top:560px;width:60px;background:#e3e3e3;border-color:#b8b8b8"></div>
<div class="btn" style="left:946px;top:560px;width:69px;background:#e3e3e3;border-color:#b8b8b8"></div>
<svg class="a" style="left:825px;top:562px" width="16" height="16"><path d="M2.5 .5h6.5l3.5 3.5v10.5h-10z" fill="#fff" stroke="#444" stroke-width="1"/><path d="M9 .5v3.5h3.5z" fill="#666" stroke="#444" stroke-width=".8"/><path d="M.3 11.2L4.2 7.3v2.4h3.6v3h-3.6v2.4z" fill="#7cc242" stroke="#3f8a1f" stroke-width=".9" stroke-linejoin="round"/></svg>
<svg class="a" style="left:887px;top:562px" width="16" height="16"><path d="M1.5 .5h6.5l3.5 3.5v10.5h-10z" fill="#fff" stroke="#444" stroke-width="1"/><path d="M8 .5v3.5h3.5z" fill="#666" stroke="#444" stroke-width=".8"/><path d="M15.2 11.2L11.3 7.3v2.4H7.7v3h3.6v2.4z" fill="#7cc242" stroke="#3f8a1f" stroke-width=".9" stroke-linejoin="round"/></svg>
<svg class="a" style="left:949px;top:563px" width="14" height="14"><path d="M2.6 2.6l8 8M10.6 2.6l-8 8" stroke="#c8461a" stroke-width="3.4" stroke-linecap="round"/><path d="M2.6 2.6l8 8M10.6 2.6l-8 8" stroke="#ea6420" stroke-width="2.2" stroke-linecap="round"/></svg>
<div class="a" style="left:849px;top:563px;line-height:16px;white-space:nowrap;color:#0b0b1a;letter-spacing:-.3px">Back</div>
<div class="a" style="left:910px;top:563px;line-height:16px;white-space:nowrap;color:#0b0b1a;letter-spacing:-.3px">Next</div>
<div class="a" style="left:972px;top:563px;line-height:16px;white-space:nowrap;color:#0b0b1a;letter-spacing:-.3px">Cancel</div>
<div class="a" style="left:874px;top:545px;width:72px;height:39px;border:1.3px solid #c4000e"></div>
</body></html>
